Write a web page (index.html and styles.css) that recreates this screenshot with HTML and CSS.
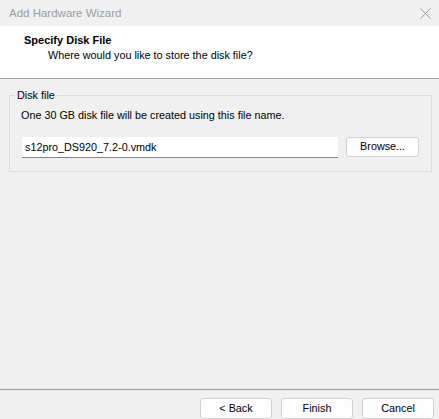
FILE: index.html
```html
<!DOCTYPE html>
<html>
<head>
<meta charset="utf-8">
<link rel="stylesheet" href="styles.css">
</head>
<body>
<div class="window">
  <div class="titlebar">
    <span class="title">Add Hardware Wizard</span>
    <svg class="close" width="11" height="11" viewBox="0 0 11 11"><path d="M0.5 0.5 L10.5 10.5 M10.5 0.5 L0.5 10.5" stroke="#9a9a9a" stroke-width="1" fill="none"/></svg>
  </div>
  <div class="header">
    <div class="h-title">Specify Disk File</div>
    <div class="h-sub">Where would you like to store the disk file?</div>
  </div>
  <div class="content">
    <fieldset class="group">
      <legend>Disk file</legend>
      <div class="desc">One 30 GB disk file will be created using this file name.</div>
      <div class="row">
        <div class="input">s12pro_DS920_7.2-0.vmdk</div>
        <button class="btn browse">Browse...</button>
      </div>
    </fieldset>
  </div>
  <div class="footer">
    <button class="btn">&lt; Back</button>
    <button class="btn">Finish</button>
    <button class="btn">Cancel</button>
  </div>
</div>
</body>
</html>
```
FILE: styles.css
```css
* { box-sizing: border-box; }
html, body { margin: 0; padding: 0; }
body {
  width: 439px;
  height: 419px;
  overflow: hidden;
  background: #f0f0f0;
  font-family: "Liberation Sans", Arial, sans-serif;
  font-size: 10.8px;
  color: #000;
}
.window {
  display: flex;
  flex-direction: column;
  height: 419px;
}
.titlebar {
  height: 26px;
  display: flex;
  align-items: center;
  justify-content: space-between;
  padding: 0 8px 0 9px;
  background: #f0f0f0;
  color: #9d9d9d;
}
.title { font-size: 11.5px; }
.header {
  height: 53px;
  background: #fff;
  border-bottom: 1px solid #a0a0a0;
  padding: 6px 0 0 24px;
}
.h-title { font-weight: bold; font-size: 11px; line-height: 16px; }
.h-sub { padding-left: 24px; line-height: 16px; margin-top: -1px; }
.content {
  flex: 1;
  padding: 9px 7px 0 9px;
}
.group {
  margin: 0;
  border: 1px solid #dcdcdc;
  padding: 0 12px 13px 11px;
  height: 84px;
  min-width: 0;
}
.group legend {
  padding: 0 2px;
  margin-left: -6px;
  line-height: 14px;
}
.desc { line-height: 16px; margin-top: 5px; }
.row {
  display: flex;
  align-items: center;
  margin-top: 14px;
  margin-left: 1px;
}
.input {
  width: 317px;
  height: 21px;
  background: #fff;
  border-bottom: 1px solid #838383;
  padding: 3px 0 0 3px;
  line-height: 15px;
}
.btn {
  font: inherit;
  color: #000;
  background: #fdfdfd;
  border: 1px solid #d0d0d0;
  border-radius: 3px;
  height: 20px;
  padding: 0;
  line-height: 17px;
}
.browse { width: 73px; margin-left: 8px; margin-top: -2px; }
.footer {
  height: 30px;
  border-top: 1px solid #a0a0a0;
  display: flex;
  justify-content: flex-end;
  gap: 9px;
  padding: 8px 5px 0 0;
}
.footer .btn { width: 72px; height: 21px; }
```
